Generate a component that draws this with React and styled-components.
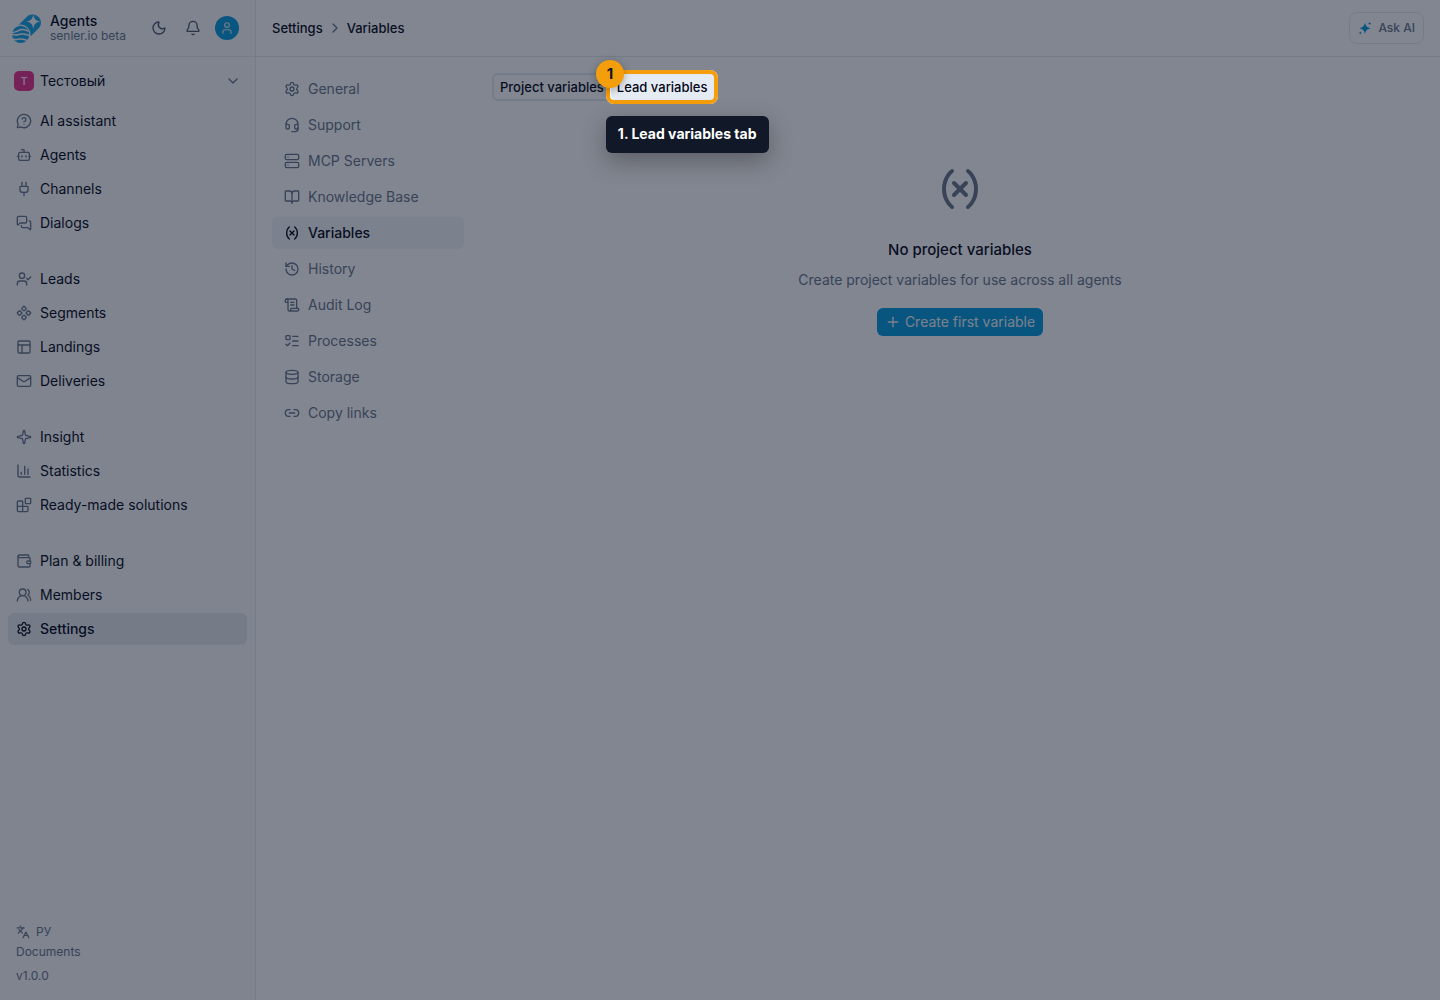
import React from 'react';
import styled, {createGlobalStyle, css} from 'styled-components';
import {
  Blocks,
  BookOpen,
  BotIcon,
  Bell,
  ChartColumn,
  ChevronDown,
  ChevronRight,
  Component,
  Database,
  Headset,
  History,
  Languages,
  Link2,
  ListTodo,
  Mail,
  MessageCircleQuestionMark,
  MessagesSquare,
  Moon,
  PanelsTopLeft,
  Plug,
  Plus,
  ScrollText,
  Server,
  Settings,
  Sparkle,
  User,
  UserCheck,
  UsersRound,
  Variable,
  Wallet,
} from 'lucide-react';

const colors = {
  text: '#020617',
  muted: '#64748b',
  border: '#e2e8f0',
  sidebar: '#f8fafc',
  active: '#e4eaef',
  primary: '#0099dd',
  accent: '#f59e0b',
  ink: '#111827',
};

const GlobalStyle = createGlobalStyle`
  * {
    box-sizing: border-box;
  }

  body {
    margin: 0;
    background: #ffffff;
    color: ${colors.text};
    font-family: Inter, sans-serif;
    font-size: 14px;
    line-height: 20px;
    overflow-x: hidden;
  }

  button {
    font: inherit;
    color: inherit;
    background: none;
    border: 0;
    padding: 0;
    cursor: pointer;
  }

  a {
    color: inherit;
    text-decoration: none;
  }

  svg {
    flex: none;
    display: block;
  }
`;

const Layout = styled.div`
  display: flex;
  min-height: 100vh;
`;

const Sidebar = styled.aside`
  flex: 0 0 256px;
  display: flex;
  flex-direction: column;
  background: ${colors.sidebar};
  border-right: 1px solid ${colors.border};
`;

const Brand = styled.div`
  display: flex;
  align-items: center;
  height: 57px;
  padding: 0 12px;
  border-bottom: 1px solid ${colors.border};
`;

const BrandText = styled.div`
  flex: 1;
  margin-left: 8px;
`;

const BrandName = styled.div`
  font-weight: 500;
  line-height: 16px;
`;

const BrandHost = styled.div`
  color: ${colors.muted};
  font-size: 12px;
  line-height: 14px;
`;

const BrandActions = styled.div`
  display: flex;
  gap: 2px;
`;

const IconButton = styled.button`
  display: grid;
  place-items: center;
  width: 32px;
  height: 32px;
  color: #475569;
`;

const Avatar = styled.span`
  display: grid;
  place-items: center;
  width: 24px;
  height: 24px;
  border-radius: 50%;
  background: ${colors.primary};
  color: #e2e8f0;
`;

const TeamButton = styled.button`
  display: flex;
  align-items: center;
  gap: 6px;
  height: 32px;
  margin: 8px 8px 0;
  padding: 0 6px;
  text-align: left;

  svg {
    margin-left: auto;
    color: ${colors.muted};
  }
`;

const TeamMark = styled.span`
  display: grid;
  place-items: center;
  width: 20px;
  height: 20px;
  border-radius: 5px;
  background: #e62e8b;
  color: #fce7f3;
  font-size: 11px;
  font-weight: 500;
`;

const Nav = styled.nav`
  display: flex;
  flex-direction: column;
  gap: 24px;
  padding: 8px;
`;

const NavGroup = styled.div`
  display: flex;
  flex-direction: column;
  gap: ${props => props.$gap || 2}px;
`;

const NavLink = styled.a`
  display: flex;
  align-items: center;
  gap: 8px;
  height: 32px;
  padding: 0 8px;
  border-radius: 6px;

  svg {
    color: ${colors.muted};
  }

  ${props =>
    props.$active &&
    css`
      background: ${colors.active};
      font-weight: 500;

      svg {
        color: ${colors.text};
      }
    `};
`;

const SidebarFooter = styled.footer`
  display: flex;
  flex-direction: column;
  align-items: flex-start;
  margin-top: auto;
  padding: 0 16px 14px;
  color: ${colors.muted};
  font-size: 12px;
`;

const LanguageButton = styled.button`
  display: flex;
  align-items: center;
  gap: 6px;
`;

const Version = styled.div`
  margin-top: 4px;
`;

const Page = styled.div`
  flex: 1;
  min-width: 0;
`;

const PageHeader = styled.header`
  display: flex;
  align-items: center;
  justify-content: space-between;
  height: 57px;
  padding: 0 16px;
  border-bottom: 1px solid ${colors.border};
`;

const Breadcrumbs = styled.nav`
  display: flex;
  align-items: center;
  gap: 4px;
  font-size: 13px;
  font-weight: 500;

  svg {
    color: ${colors.muted};
  }
`;

const AskButton = styled.button`
  display: flex;
  align-items: center;
  gap: 6px;
  height: 32px;
  padding: 0 8px;
  border: 1px solid ${colors.border};
  border-radius: 8px;
  color: ${colors.muted};
  font-size: 12px;
  font-weight: 500;
`;

const Body = styled.div`
  display: flex;
  align-items: flex-start;
  gap: 16px;
  padding: 16px 0 16px 16px;
`;

const SubNav = styled.nav`
  flex: 0 0 192px;
`;

const SubLink = styled(NavLink)`
  padding: 0 12px;
  color: ${props => (props.$active ? colors.text : colors.muted)};

  ${props =>
    props.$active &&
    css`
      background: #f1f5f9;
    `};
`;

const Content = styled.main`
  flex: 1;
  min-width: 0;
  padding: 0 12px;
`;

const Tabs = styled.div`
  display: inline-flex;
  gap: 1px;
  border: 2px solid ${colors.border};
  border-radius: 6px;
  vertical-align: top;
`;

const TabSlot = styled.div`
  position: relative;
`;

const Tab = styled.button`
  height: 24px;
  padding: 0 6px;
  border-radius: 4px;
  background: ${props => (props.$active ? '#e5ebf2' : 'none')};
  font-size: 13px;
  font-weight: 500;
`;

// Everything outside the ring is dimmed by its oversized shadow
const Spotlight = styled.div`
  position: absolute;
  inset: -5px;
  z-index: 10;
  border: 4px solid ${colors.accent};
  border-radius: 8px;
  box-shadow: 0 0 0 9999px rgba(15, 23, 42, 0.52);
  pointer-events: none;
`;

const StepBadge = styled.div`
  position: absolute;
  top: -15px;
  left: -15px;
  z-index: 12;
  display: grid;
  place-items: center;
  width: 28px;
  height: 28px;
  border-radius: 50%;
  background: ${colors.accent};
  box-shadow: 0 2px 8px rgba(0, 0, 0, 0.3);
  color: ${colors.ink};
  font-size: 15px;
  font-weight: 700;
`;

const Tooltip = styled.div`
  position: absolute;
  top: 41px;
  left: -5px;
  z-index: 11;
  padding: 8px 12px 9px;
  border-radius: 6px;
  background: ${colors.ink};
  box-shadow: 0 8px 24px rgba(0, 0, 0, 0.3);
  color: #ffffff;
  font-weight: 700;
  white-space: nowrap;
`;

const Empty = styled.section`
  display: flex;
  flex-direction: column;
  align-items: center;
  padding-top: 64px;
  color: ${colors.muted};
  text-align: center;
`;

const EmptyTitle = styled.h2`
  margin: 25px 0 0;
  color: ${colors.text};
  font-size: 15px;
  font-weight: 500;
  line-height: 24px;
`;

const EmptyText = styled.p`
  margin: 8px 0 18px;
`;

const PrimaryButton = styled.button`
  display: flex;
  align-items: center;
  gap: 4px;
  height: 28px;
  padding: 0 8px;
  border-radius: 6px;
  background: ${colors.primary};
  color: #f1f5f9;
`;

const Logo = () => (
  <svg width="30" height="30" viewBox="0 0 30 30" aria-hidden="true">
    <path
      d="M6.500 12L16 2.700A8.400 8.400 0 0 1 27.600 14.300L18.500 23.500z"
      fill="#11a3e6"
    />
    <path
      d="M21.300 1.200c.9 5 2.400 6.500 7.200 7.400-4.800.9-6.300 2.400-7.200 7.400-.9-5-2.400-6.500-7.300-7.400 4.900-.9 6.400-2.400 7.300-7.400z"
      fill={colors.sidebar}
    />
    <circle cx="8.700" cy="21.400" r="9.200" fill="#11a3e6" stroke={colors.sidebar} strokeWidth="1.200" />
    <path
      d="M-1 19.200c3 .8 5-.6 7.500-1.700 3.500-1.500 6.500-1.300 10 .8M-1 20.500c3 2.800 6 1.400 9 .7 3.500-.8 6-.3 10.500 1.800M0 26c3 .9 5.500.2 8 0 3-.2 5 .3 8 1.800"
      fill="none"
      stroke={colors.sidebar}
      strokeWidth="1.500"
    />
  </svg>
);

const AskIcon = () => (
  <svg width="14" height="14" viewBox="0 0 14 14" fill={colors.primary} aria-hidden="true">
    <path d="M7 1.700c1 3.600 1.900 4.500 5.500 5.500-3.600 1-4.500 1.900-5.500 5.500-1-3.600-1.900-4.500-5.500-5.500 3.600-1 4.500-1.900 5.500-5.500z" />
    <path d="M11.700.8c.3 1.100.6 1.400 1.700 1.700-1.100.3-1.400.6-1.700 1.700-.3-1.100-.6-1.400-1.700-1.700 1.100-.3 1.400-.6 1.700-1.700z" />
    <path d="M2.300 10.200c.3 1.100.6 1.400 1.700 1.700-1.100.3-1.400.6-1.700 1.700-.3-1.100-.6-1.400-1.700-1.700 1.100-.3 1.400-.6 1.700-1.700z" />
  </svg>
);

const groups = [
  [
    ['AI assistant', MessageCircleQuestionMark],
    ['Agents', BotIcon],
    ['Channels', Plug],
    ['Dialogs', MessagesSquare],
  ],
  [
    ['Leads', UserCheck],
    ['Segments', Component],
    ['Landings', PanelsTopLeft],
    ['Deliveries', Mail],
  ],
  [
    ['Insight', Sparkle],
    ['Statistics', ChartColumn],
    ['Ready-made solutions', Blocks],
  ],
  [
    ['Plan & billing', Wallet],
    ['Members', UsersRound],
    ['Settings', Settings],
  ],
];

const sections = [
  ['General', Settings],
  ['Support', Headset],
  ['MCP Servers', Server],
  ['Knowledge Base', BookOpen],
  ['Variables', Variable],
  ['History', History],
  ['Audit Log', ScrollText],
  ['Processes', ListTodo],
  ['Storage', Database],
  ['Copy links', Link2],
];

const MainMenu = () => (
  <Sidebar>
    <Brand>
      <Logo />
      <BrandText>
        <BrandName>Agents</BrandName>
        <BrandHost>senler.io beta</BrandHost>
      </BrandText>
      <BrandActions>
        <IconButton aria-label="Theme">
          <Moon size={16} />
        </IconButton>
        <IconButton aria-label="Notifications">
          <Bell size={16} />
        </IconButton>
        <IconButton aria-label="Profile">
          <Avatar>
            <User size={14} />
          </Avatar>
        </IconButton>
      </BrandActions>
    </Brand>
    <TeamButton>
      <TeamMark>Т</TeamMark>
      Тестовый
      <ChevronDown size={16} />
    </TeamButton>
    <Nav>
      {groups.map(items => (
        <NavGroup key={items[0][0]}>
          {items.map(([label, Icon]) => (
            <NavLink href="#" key={label} $active={label === 'Settings'}>
              <Icon size={16} />
              {label}
            </NavLink>
          ))}
        </NavGroup>
      ))}
    </Nav>
    <SidebarFooter>
      <LanguageButton>
        <Languages size={14} />
        РУ
      </LanguageButton>
      <a href="#">Documents</a>
      <Version>v1.0.0</Version>
    </SidebarFooter>
  </Sidebar>
);

const App = () => (
  <Layout>
    <GlobalStyle />
    <MainMenu />
    <Page>
      <PageHeader>
        <Breadcrumbs>
          <a href="#">Settings</a>
          <ChevronRight size={16} />
          <a href="#">Variables</a>
        </Breadcrumbs>
        <AskButton>
          <AskIcon />
          Ask AI
        </AskButton>
      </PageHeader>
      <Body>
        <SubNav>
          <NavGroup $gap={4}>
            {sections.map(([label, Icon]) => (
              <SubLink href="#" key={label} $active={label === 'Variables'}>
                <Icon size={16} />
                {label}
              </SubLink>
            ))}
          </NavGroup>
        </SubNav>
        <Content>
          <Tabs>
            <Tab>Project variables</Tab>
            <TabSlot>
              <Tab $active>Lead variables</Tab>
              <Spotlight />
              <StepBadge>1</StepBadge>
              <Tooltip>1. Lead variables tab</Tooltip>
            </TabSlot>
          </Tabs>
          <Empty>
            <Variable size={48} />
            <EmptyTitle>No project variables</EmptyTitle>
            <EmptyText>Create project variables for use across all agents</EmptyText>
            <PrimaryButton>
              <Plus size={16} />
              Create first variable
            </PrimaryButton>
          </Empty>
        </Content>
      </Body>
    </Page>
  </Layout>
);

export default App;
